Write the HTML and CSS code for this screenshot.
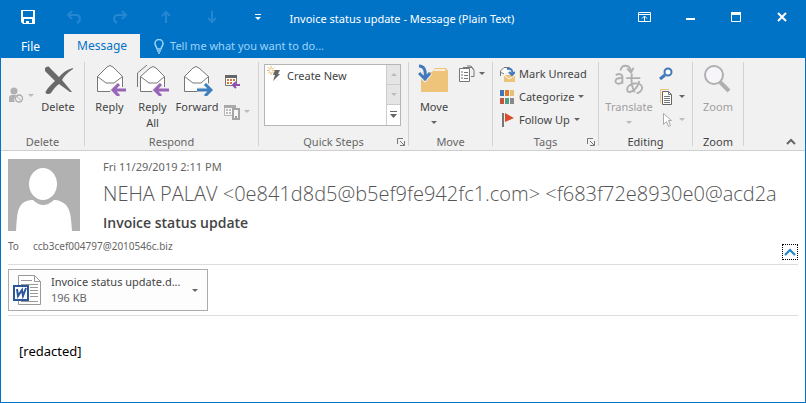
FILE: index.html
```html
<!DOCTYPE html>
<html lang="en">
<head>
<meta charset="utf-8">
<title>Invoice status update - Message (Plain Text)</title>
<link rel="stylesheet" href="styles.css">
</head>
<body>
<div class="window">
  <header class="titlebar">
    <div class="quick-access">
      <button class="tool" aria-label="Save"><svg width="14" height="14" viewBox="0 0 14 14"><path fill="#fff" fill-rule="evenodd" d="M0 0h14v14H2L0 12zM2 1v6h10V1zM3 9v4h2v-2h3v2h3V9z"/></svg></button>
      <button class="tool faded" aria-label="Undo"><svg width="16" height="14" viewBox="0 0 16 14"><path d="M6 1L2 5l4 4M2 5h8c5 0 5 6 1 8" fill="none" stroke="currentColor" stroke-width="2"/></svg></button>
      <button class="tool faded" aria-label="Redo"><svg width="16" height="14" viewBox="0 0 16 14"><path d="M10 1l4 4-4 4M14 5H6c-5 0-5 6-1 8" fill="none" stroke="currentColor" stroke-width="2"/></svg></button>
      <button class="tool faded" aria-label="Previous item"><svg width="12" height="14" viewBox="0 0 12 14"><path d="M6 13V2M2 6l4-4 4 4" fill="none" stroke="currentColor" stroke-width="2"/></svg></button>
      <button class="tool faded" aria-label="Next item"><svg width="12" height="14" viewBox="0 0 12 14"><path d="M6 1v11M2 8l4 4 4-4" fill="none" stroke="currentColor" stroke-width="2"/></svg></button>
      <button class="tool" aria-label="Customize toolbar"><svg width="6" height="8" viewBox="0 0 6 8"><path d="M0 1h6v1H0zM0 4h6L3 7z" fill="#fff"/></svg></button>
    </div>
    <h1 class="window-title">Invoice status update - Message (Plain Text)</h1>
    <div class="window-controls">
      <button class="tool" aria-label="Ribbon display options"><svg width="13" height="10" viewBox="0 0 13 10"><path d="M.5.5h12v9H.5zM0 2.500h13M6.500 9V4.500M4 6.500L6.500 4 9 6.500" fill="none" stroke="#fff"/></svg></button>
      <button class="tool" aria-label="Minimize"><svg width="10" height="10" viewBox="0 0 10 10"><path d="M1 6h9v2H1z" fill="#fff"/></svg></button>
      <button class="tool" aria-label="Maximize"><svg width="10" height="10" viewBox="0 0 10 10"><path d="M.5.5h9v9h-9z" fill="none" stroke="#fff"/><path d="M0 0h10v3H0z" fill="#fff"/></svg></button>
      <button class="tool" aria-label="Close"><svg width="10" height="10" viewBox="0 0 10 10"><path d="M1 1l8 8M9 1L1 9" stroke="#fff" stroke-width="2"/></svg></button>
    </div>
  </header>

  <nav class="tabs">
    <button class="tab file">File</button>
    <button class="tab active">Message</button>
    <button class="tab tell"><svg width="10" height="15" viewBox="0 0 10 15"><path d="M3 10C3 8 1 7 1 4.500a4 4 0 0 1 8 0C9 7 7 8 7 10zM3 12h4M4 14h2" fill="none" stroke="currentColor" stroke-width="1.500"/></svg>Tell me what you want to do...</button>
  </nav>

  <section class="ribbon" aria-label="Ribbon">
    <div class="group g-delete">
      <div class="tools">
        <button class="small lone" disabled aria-label="Junk"><svg width="16" height="17" viewBox="0 0 16 17"><g fill="#b0b0b0"><circle cx="6" cy="4" r="3.500"/><path d="M1 15V11q0-3 3-3h4L6 13l1 2z"/></g><circle cx="11" cy="11.500" r="3.500" fill="#f1f1f1" stroke="#aaa" stroke-width="1.300"/><path d="M8.500 9l5 5" stroke="#aaa"/></svg><i class="caret"></i></button>
        <button class="big"><svg width="32" height="32" viewBox="0 0 32 32"><path d="M3 4c2-2 4-2 5 0l9 9C21 8 26 5 31 4v1c-5 3-9 7-11 11l10 12h-2L17 20c-4 3-6 6-8 9-2 2-7 1-5-2 2-4 6-7 9-10L3 7z" fill="#696969"/></svg><span>Delete</span></button>
      </div>
      <h2>Delete</h2>
    </div>

    <div class="group g-respond">
      <div class="tools">
        <button class="big"><svg width="32" height="32" viewBox="0 0 32 32"><path d="M3.500 27.500v-15L13 3q3-3 6 0l9.500 9.500v15z" fill="#fff" stroke="#777"/><path d="M3.500 12.500L12 19h8l8.500-6.500" fill="none" stroke="#777"/><path d="M32 26H20M25 20l-6 6 6 6" fill="none" stroke="#f1f1f1" stroke-width="6"/><path d="M32 26H20M25 20l-6 6 6 6" fill="none" stroke="#9864b8" stroke-width="3"/></svg><span>Reply</span></button>
        <button class="big"><svg width="32" height="32" viewBox="0 0 32 32"><path d="M.5 23V9L10 1" fill="none" stroke="#777"/><path d="M3.500 27.500v-15L13 4q3-3 6 0l8.500 8.500v15z" fill="#fff" stroke="#777"/><path d="M3.500 12.500L12 19h8l7.500-6.500" fill="none" stroke="#777"/><path d="M32 26H19M24 20l-6 6 6 6" fill="none" stroke="#f1f1f1" stroke-width="6"/><path d="M32 26H19M24 20l-6 6 6 6" fill="none" stroke="#9864b8" stroke-width="3"/></svg><span>Reply<br>All</span></button>
        <button class="big"><svg width="32" height="32" viewBox="0 0 32 32"><path d="M3.500 27.500v-15L12 4q3-3 6 0l9.500 8.500v15z" fill="#fff" stroke="#777"/><path d="M3.500 12.500L12 19h8l7.500-6.500" fill="none" stroke="#777"/><path d="M16 26h13M24 20l6 6-6 6" fill="none" stroke="#f1f1f1" stroke-width="6"/><path d="M16 26h13M24 20l6 6-6 6" fill="none" stroke="#3d7ebd" stroke-width="3"/></svg><span>Forward</span></button>
        <div class="stack roomy">
          <button class="small" aria-label="Reply with meeting"><svg width="16" height="16" viewBox="0 0 16 16"><path d="M1.500 2.500h11v10h-11z" fill="#fff" stroke="#777"/><path d="M1 2h12v3H1z" fill="#666"/><path d="M3 7h2m1 0h2m1 0h2M3 10h2m1 0h2" stroke="#d07b3b" stroke-width="2"/><path d="M16 12H9M12 9l-3 3 3 3" fill="none" stroke="#8d4fb0" stroke-width="2"/></svg></button>
          <button class="small" disabled aria-label="More respond actions"><svg width="16" height="16" viewBox="0 0 16 16"><path d="M.5 1.500h11v10H.5z" fill="#f8f8f8" stroke="#b5b5b5"/><path d="M0 1h12v3H0z" fill="#aaa"/><path d="M2 6h2m1 0h2M2 9h2m1 0h2" stroke="#bbb" stroke-width="2"/><path d="M9 5h6v10H9z" fill="#f8f8f8" stroke="#a5a5a5" stroke-width="2"/><path d="M11 12h2v2h-2z" fill="#999"/></svg><i class="caret"></i></button>
        </div>
      </div>
      <h2>Respond</h2>
    </div>

    <div class="group g-quick">
      <div class="gallery">
        <button class="quick-step"><svg width="16" height="16" viewBox="0 0 16 16"><path d="M4 0v9M0 4.500h8M1 1.500l6 6M7 1.500l-6 6" stroke="#e0b767"/><circle cx="4" cy="4.500" r="1.500" fill="#fff"/><path d="M8 4h5l-2 4h2L6 15l2-6H6z" fill="#666"/></svg>Create New</button>
        <div class="gallery-scroll">
          <button disabled aria-label="Scroll up"><i class="caret up"></i></button>
          <button disabled aria-label="Scroll down"><i class="caret"></i></button>
          <button aria-label="More quick steps"><svg width="7" height="8" viewBox="0 0 7 8"><path d="M0 0h7v1H0zM0 3h7L3.500 7z" fill="#666"/></svg></button>
        </div>
      </div>
      <h2>Quick Steps</h2>
      <button class="launcher" aria-label="Quick Steps options"><svg width="8" height="8" viewBox="0 0 8 8"><path d="M.5 6V.5H6M3 3l4 4M7.500 3v4.500H3" fill="none" stroke="#777"/></svg></button>
    </div>

    <div class="group g-move">
      <div class="tools">
        <button class="big"><svg width="32" height="32" viewBox="0 0 32 32"><path d="M3 8h11l3-4h11l2 3v21H3z" fill="#edc47a"/><path d="M17 5h10l1 2H15z" fill="#fff" opacity=".7"/><path d="M1 2c5 0 7 4 6 11M1 9l6 6 5-6" fill="none" stroke="#f1f1f1" stroke-width="5"/><path d="M1 2c5 0 7 4 6 11M1 9l6 6 5-6" fill="none" stroke="#4379bc" stroke-width="3"/></svg><span>Move</span><i class="caret"></i></button>
        <button class="small" aria-label="Rules"><svg width="16" height="18" viewBox="1 0 16 18"><path d="M1.500 3.500h10v13h-10z" fill="#fff" stroke="#777"/><path d="M3 7h2M3 10h2M3 13h2M6 7.500h4M6 10.500h4M6 13.500h4" stroke="#777"/><path d="M5 2.500h9l2 3v6h-3M9 1h4l3 4" fill="none" stroke="#777"/></svg><i class="caret"></i></button>
      </div>
      <h2>Move</h2>
    </div>

    <div class="group g-tags">
      <div class="stack">
        <button class="small"><svg width="16" height="16" viewBox="0 0 16 16"><path d="M1.500 10V5L5 1.500h5L13 4" fill="#fff" stroke="#777"/><path d="M1 6l4 2" stroke="#777"/><path d="M5 9h11v7H5z" fill="#edc47a"/><path d="M5 9l5 4 6-4" fill="none" stroke="#fff"/><path d="M8 3c4-1 6 1 5 5M10 6l3 3 3-3" fill="none" stroke="#4379bc" stroke-width="2"/></svg>Mark Unread</button>
        <button class="small"><svg width="16" height="16" viewBox="0 0 16 16"><path d="M1 1h4v6H1z" fill="#3e77b5"/><path d="M6 1h4v6H6z" fill="#e07a20"/><path d="M11 1h4v6h-4z" fill="#e8bf78"/><path d="M1 9h4v6H1z" fill="#c4543c"/><path d="M6 9h4v6H6z" fill="#4d9e83"/><path d="M11 9h4v6h-4z" fill="#888"/></svg>Categorize<i class="caret"></i></button>
        <button class="small"><svg width="16" height="16" viewBox="0 0 16 16"><path d="M3 1h2v14H3z" fill="#777"/><path d="M6 1l9 5-9 4z" fill="#dc4b2a"/></svg>Follow Up<i class="caret"></i></button>
      </div>
      <h2>Tags</h2>
      <button class="launcher" aria-label="Tags options"><svg width="8" height="8" viewBox="0 0 8 8"><path d="M.5 6V.5H6M3 3l4 4M7.500 3v4.500H3" fill="none" stroke="#777"/></svg></button>
    </div>

    <div class="group g-editing">
      <div class="tools">
        <button class="big" disabled><svg width="32" height="34" viewBox="0 0 32 34"><g fill="none" stroke="#b0b0b0" stroke-width="2"><path d="M2 12c2-2 7-2 7 2v7M9 15c-9-1-9 6-4 6q3 0 4-3M7 7c1-7 10-7 11 1M14 5l4 4 3-5M13 15h15M19 10c-1 10 0 14 3 20M27 18c-3 11-13 15-13 9 0-7 15-9 16-2 0 4-4 6-6 6"/></g></svg><span>Translate</span><i class="caret"></i></button>
        <div class="stack">
          <button class="small" aria-label="Find"><svg width="16" height="16" viewBox="0 0 16 16"><circle cx="9" cy="6" r="3.500" fill="#fff" stroke="#4379bc" stroke-width="2"/><path d="M6 9l-5 4" stroke="#4379bc" stroke-width="3"/></svg></button>
          <button class="small" aria-label="Related"><svg width="16" height="16" viewBox="0 0 16 16"><path d="M1.500 14V.5H10" fill="none" stroke="#edc47a"/><path d="M3.500 2.500h6l3 3v10h-9z" fill="#fff" stroke="#666"/><path d="M9.500 2.500v3h3M5 7.500h6M5 9.500h6M5 11.500h6M5 13.500h6" fill="none" stroke="#777"/></svg><i class="caret"></i></button>
          <button class="small" disabled aria-label="Select"><svg width="16" height="16" viewBox="0 0 16 16"><path d="M4.500 1.500v11l3-3 2 5 2-1-2-5h3z" fill="#fff" stroke="#aaa"/></svg><i class="caret"></i></button>
        </div>
      </div>
      <h2>Editing</h2>
    </div>

    <div class="group g-zoom">
      <div class="tools">
        <button class="big" disabled><svg width="32" height="32" viewBox="0 0 32 32"><circle cx="12" cy="11" r="9" fill="#f8f5fa" stroke="#b0b0b0" stroke-width="2"/><path d="M18 18l9 9" stroke="#b0b0b0" stroke-width="4"/></svg><span>Zoom</span></button>
      </div>
      <h2>Zoom</h2>
    </div>
    <button class="collapse" aria-label="Collapse the ribbon"><svg width="10" height="7" viewBox="0 0 10 7"><path d="M1 6l4-4 4 4" fill="none" stroke="#666" stroke-width="2"/></svg></button>
  </section>

  <main class="message">
    <div class="sender">
      <svg class="photo" viewBox="0 0 72 72" role="img" aria-label="Sender"><path d="M0 0h72v72H0z" fill="#b1b1b1"/><ellipse cx="35" cy="25" rx="14" ry="16" fill="#fff"/><path d="M8 72c1-14 1-21 5-26 3-4 8-5 12-5q10 10 21 0c5 0 9 2 12 5 5 6 5 13 6 26z" fill="#fff"/></svg>
      <div class="heading">
        <p class="date">Fri 11/29/2019 2:11 PM</p>
        <p class="from">NEHA PALAV &lt;0e841d8d5@b5ef9fe942fc1.com&gt; &lt;f683f72e8930e0@acd2a</p>
        <h2 class="subject">Invoice status update</h2>
      </div>
    </div>
    <div class="recipients">
      <span class="to">To</span><span>ccb3cef004797@2010546c.biz</span>
      <button class="expand" aria-label="Collapse header"><svg width="12" height="8" viewBox="0 0 12 8"><path d="M1 7l5-5 5 5" fill="none" stroke="#1e82c8" stroke-width="2"/></svg></button>
    </div>
    <div class="attachments">
      <button class="attachment">
        <svg width="30" height="32" viewBox="0 0 30 32"><path d="M6.500 1.500h16l6 6v23h-22z" fill="#fff" stroke="#999"/><path d="M22.500 1.500v6h6M9 6.500h11M9 10.500h17M18 13.500h8M18 16.500h8M18 19.500h8M18 22.500h8M9 27.500h17" fill="none" stroke="#999"/><path d="M2 12h14v14H2z" fill="#fff" stroke="#2b579a" stroke-width="2"/><path d="M5 15l1 7 4-6 1 6 3-8" fill="none" stroke="#2b579a" stroke-width="2"/></svg>
        <span class="file-info"><span>Invoice status update.d...</span><span class="size">196 KB</span></span>
        <i class="caret"></i>
      </button>
    </div>
    <p class="body-text">[redacted]</p>
  </main>
</div>
</body>
</html>
```
FILE: styles.css
```css
* { box-sizing: border-box; }

body {
  margin: 0;
  font: 12px/16px "Noto Sans", "Open Sans", sans-serif;
  color: #444;
}

h1, h2, p { margin: 0; font-weight: 400; }
svg { display: block; flex: none; }

button {
  margin: 0;
  padding: 0;
  border: 0;
  background: none;
  color: inherit;
  font: inherit;
}

.window {
  display: flex;
  flex-direction: column;
  min-height: 100vh;
  border: 1px solid #0173c7;
  border-top: 0;
  background: #fff;
}

.titlebar {
  display: grid;
  grid-template-columns: 1fr auto 1fr;
  align-items: center;
  height: 34px;
  padding-left: 4px;
  background: #0173c7;
  color: #fff;
}

.quick-access, .window-controls { display: flex; }
.window-controls { justify-content: flex-end; }
.tool { display: grid; place-items: center; width: 46px; height: 32px; }
.faded { color: #2586d2; }
.window-title { padding: 4px 6px 0 0; font-size: 11px; }

.tabs {
  display: flex;
  height: 24px;
  background: #0173c7;
  color: #fff;
}

.tab { padding: 0 13px; }
.file { width: 63px; padding: 2px 4px 0 0; }
.active { background: #f1f1f1; color: #0173c7; }
.tell { display: flex; align-items: center; gap: 6px; padding: 0 14px; font-size: 11px; color: #9fd3f8; }

.ribbon {
  display: flex;
  height: 93px;
  padding-top: 4px;
  border-bottom: 1px solid #cfcfcf;
  background: #f1f1f1;
}

.group {
  position: relative;
  display: flex;
  flex: none;
  flex-direction: column;
  justify-content: space-between;
  height: 84px;
  border-right: 1px solid #d2d2d2;
  font-size: 11px;
}

.group h2 { margin-bottom: -4px; font-size: 11px; line-height: 16px; text-align: center; color: #666; }
.g-delete { width: 84px; }
.g-respond { width: 174px; }
.g-quick { width: 150px; }
.g-move { width: 84px; }
.g-tags { width: 106px; }
.g-editing { width: 94px; }
.g-zoom { width: 51px; }
.g-editing h2, .g-zoom h2 { color: #444; }

.tools { display: flex; align-items: flex-start; }

.big {
  display: flex;
  flex: none;
  flex-direction: column;
  align-items: center;
  width: 50px;
  padding-top: 2px;
}

.big svg { height: 32px; margin-bottom: 3px; }
.big .caret { margin-top: 6px; }
.g-delete .big { width: 46px; }
.g-respond .tools { padding-left: 3px; }
.g-respond .big { width: 43px; }
.g-respond .big:nth-child(3) { width: 46px; }
.g-editing .big { width: 60px; }

.small { display: flex; align-items: center; gap: 4px; height: 23px; white-space: nowrap; }
.lone { margin: 22px 1px 0 7px; }
.stack { display: flex; flex-direction: column; align-items: flex-start; }
.roomy { gap: 8px; padding: 7px 0 0 4px; }
.g-tags .stack { padding-left: 6px; }

.caret { flex: none; border: 3px solid transparent; border-top-color: #666; border-bottom: 0; }
.caret.up { border-top: 0; border-bottom: 3px solid #bbb; }
button:disabled { color: #a0a0a0; }
button:disabled .caret:not(.up) { border-top-color: #bbb; }

.gallery { display: flex; height: 62px; margin: 2px 7px 0 5px; border: 1px solid #b5b5b5; background: #fff; }
.quick-step { display: flex; flex: 1; align-items: flex-start; gap: 4px; padding: 1px 2px; line-height: 20px; }
.gallery-scroll { display: grid; width: 14px; grid-template-rows: repeat(3, 1fr); border-left: 1px solid #ccc; }
.gallery-scroll button { display: grid; place-items: center; }
.gallery-scroll button:disabled { border-bottom: 1px solid #ccc; background: #e5e5e5; }

.launcher { position: absolute; right: 3px; bottom: 0; }
.collapse { align-self: flex-end; margin: 0 9px 5px auto; }

.message { flex: 1; padding: 8px 7px 0; }
.sender { display: flex; gap: 23px; padding-right: 16px; }
.photo { width: 72px; height: 72px; }
.heading { flex: 1; min-width: 0; }
.date { font-size: 11px; color: #666; }
.from {
  overflow: hidden;
  margin: 2px 0 3px;
  font: 300 20px/34px "Open Sans", "Noto Sans", sans-serif;
  white-space: nowrap;
  color: #555;
}
.subject { font: 600 14px/18px "Open Sans", "Noto Sans", sans-serif; }

.recipients {
  display: flex;
  align-items: center;
  height: 33px;
  padding-bottom: 4px;
  border-bottom: 1px solid #ddd;
  font-size: 10px;
  color: #666;
}
.to { width: 25px; }
.expand { display: grid; place-items: center; align-self: flex-end; width: 16px; height: 16px; margin-left: auto; border: 1px dotted #000; }

.attachments { padding: 4px 0; border-bottom: 1px solid #ddd; }
.attachment {
  display: flex;
  align-items: center;
  width: 200px;
  height: 42px;
  padding: 0 9px 0 3px;
  border: 1px solid #ababab;
  background: #fdfdfd;
  text-align: left;
  font-size: 11px;
}
.file-info { display: flex; flex: 1; flex-direction: column; padding-left: 9px; white-space: nowrap; }
.size { color: #666; }
.body-text { padding: 27px 11px; font-size: 13px; color: #000; }
```
